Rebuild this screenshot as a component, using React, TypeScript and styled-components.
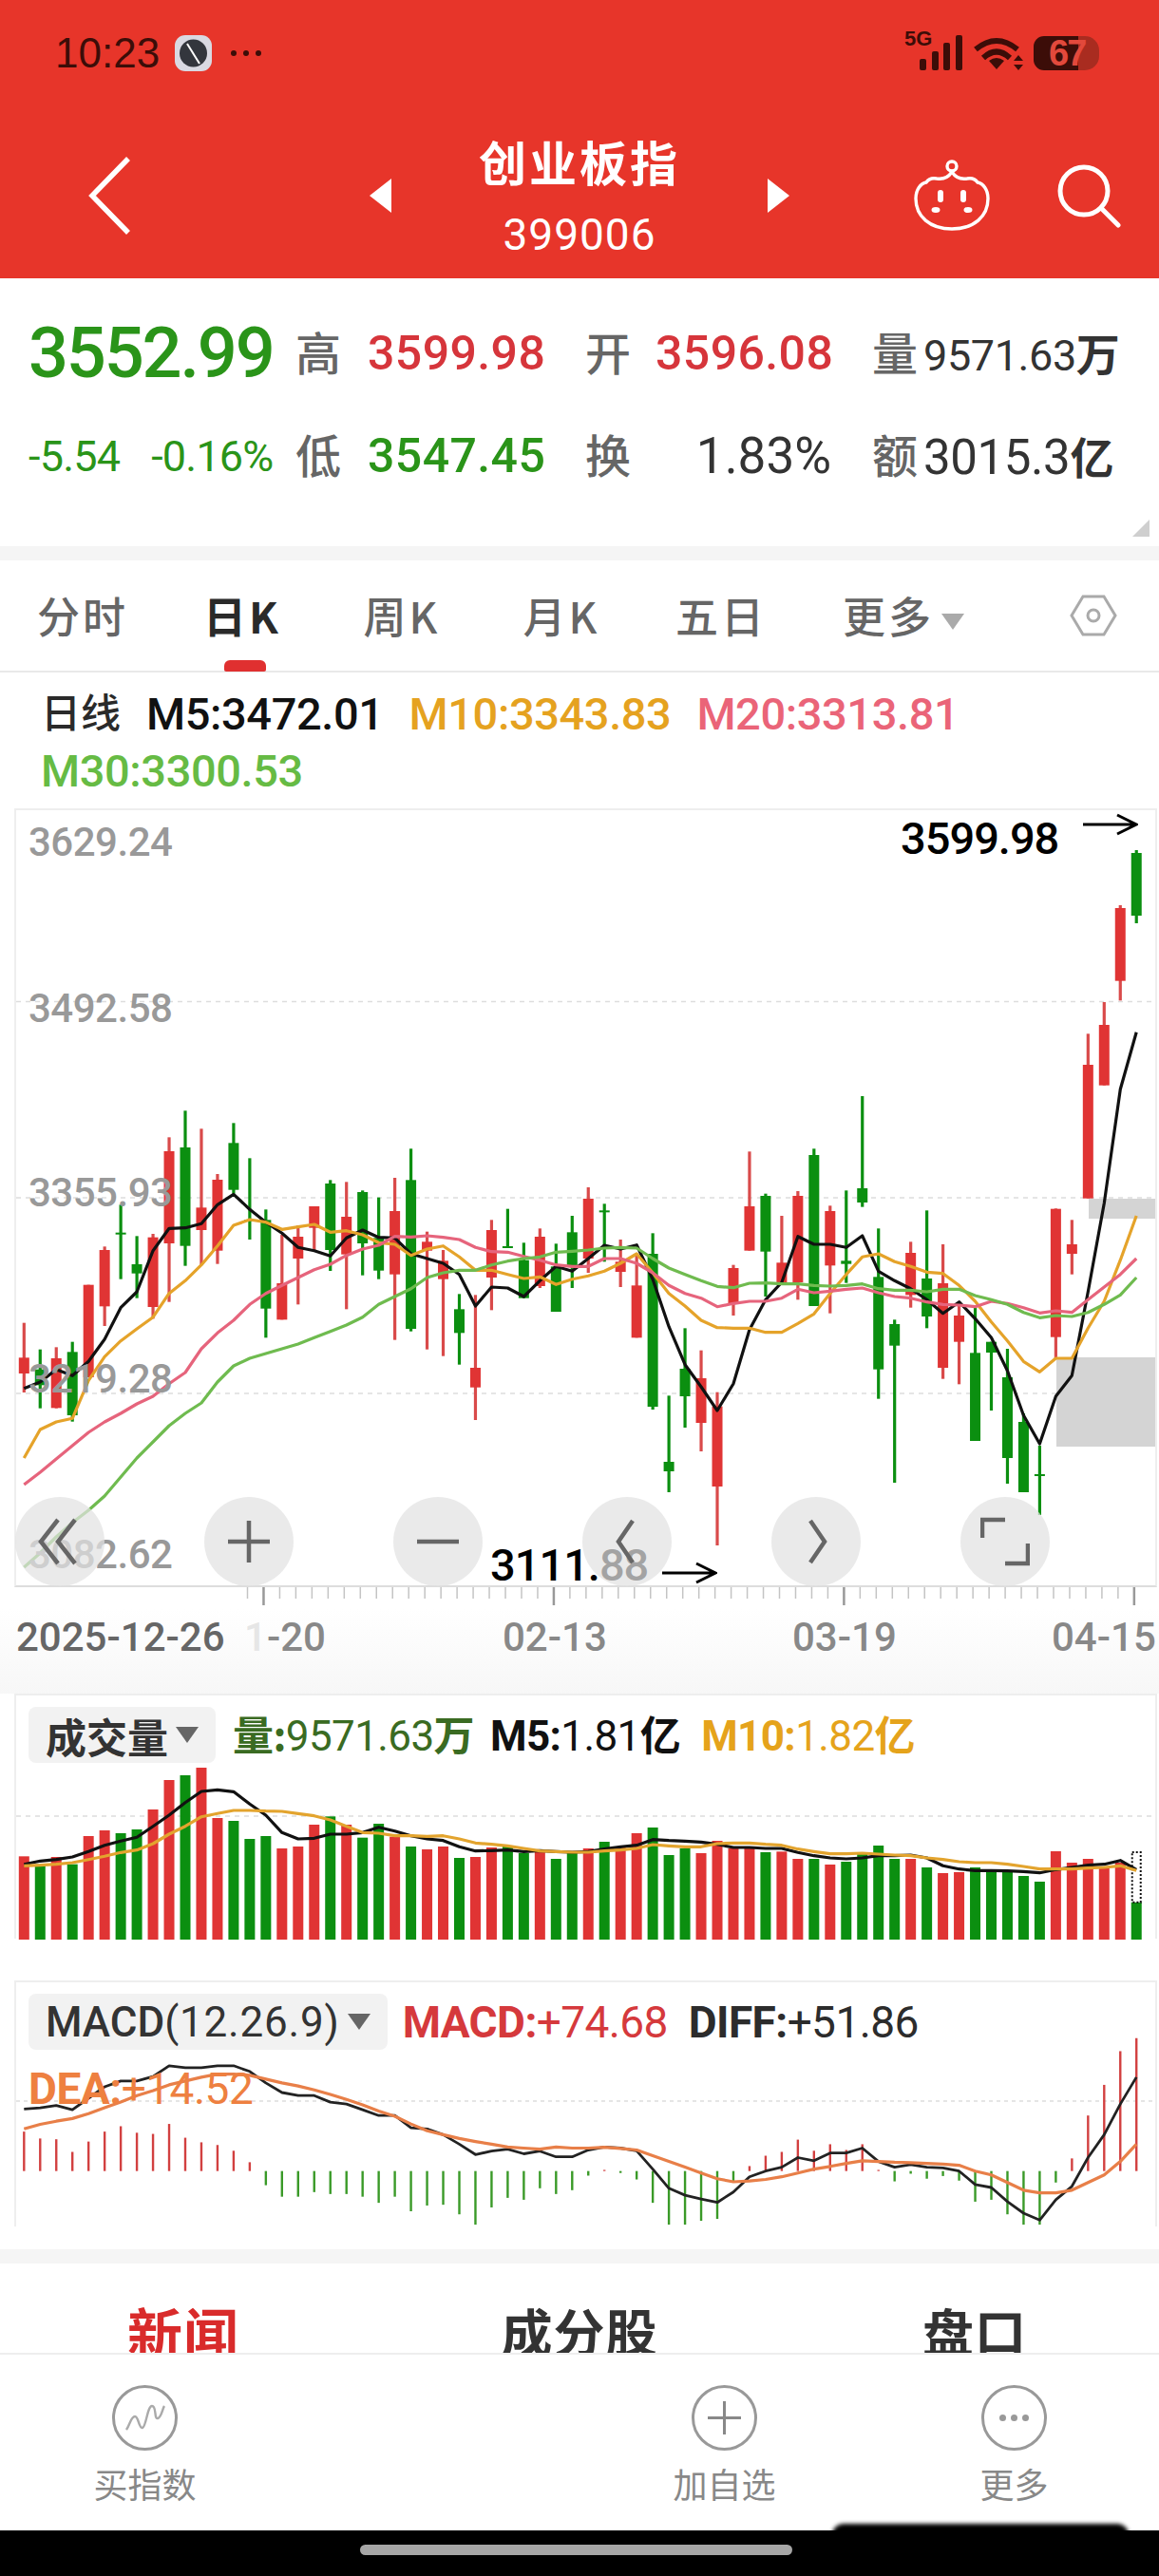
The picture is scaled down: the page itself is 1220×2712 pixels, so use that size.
import React from 'react';
import styled, { createGlobalStyle } from 'styled-components';

const GlobalStyle = createGlobalStyle`
  html, body {
    margin: 0;
    padding: 0;
    background: #fff;
  }
  * {
    box-sizing: border-box;
  }
`;

const SANS = `"Liberation Sans", "Noto Sans CJK SC", sans-serif`;
const ROBOTO = `Roboto, "Noto Sans CJK SC", sans-serif`;
const RED = '#e03434';
const GREEN = '#0b8f10';

const Page = styled.div`
  position: relative;
  width: 1220px;
  height: 2712px;
  overflow: hidden;
  background: #fff;
  font-family: ${SANS};
  display: flex;
  flex-direction: column;
`;

/* ---------- header ---------- */

const Header = styled.header`
  height: 293px;
  background: #e7352a;
  padding-top: 37px;
  flex: none;
`;

const StatusBar = styled.div`
  height: 37px;
  display: flex;
  align-items: center;
  padding-left: 58px;
  color: #3c0d08;
`;

const Clock = styled.span`
  font-size: 44px;
  line-height: 37px;
  width: 126px;
`;

const StatusRight = styled.div`
  margin-left: auto;
  margin-right: 63px;
  display: flex;
  align-items: center;
  gap: 11px;
`;

const NetworkBlock = styled.div`
  position: relative;
  width: 62px;
  height: 37px;
`;

const FiveG = styled.span`
  position: absolute;
  left: 0;
  top: -7px;
  font-size: 22px;
  line-height: 22px;
  font-weight: 700;
`;

const Battery = styled.div`
  width: 69px;
  height: 36px;
  border-radius: 11px 15px 15px 11px;
  background: linear-gradient(90deg, #3c0d08 68%, #a92c20 68%);
  color: #e2493c;
  font-size: 38px;
  font-weight: 700;
  line-height: 36px;
  padding-left: 16px;
  letter-spacing: -2px;
`;

const NavRow = styled.div`
  margin-top: 66px;
  height: 130px;
  display: grid;
  grid-template-columns: 389px 442px 1fr;
  align-items: center;
`;

const NavLeft = styled.div`
  padding-left: 92px;
  display: flex;
`;

const NavCenter = styled.div`
  display: flex;
  align-items: center;
  justify-content: space-between;
`;

const NavTitle = styled.div`
  display: flex;
  flex-direction: column;
  align-items: center;
  color: #fff;
`;

const Name = styled.div`
  margin-top: -4px;
  font-size: 50px;
  line-height: 66px;
  font-weight: 700;
  letter-spacing: 3px;
  font-family: "Noto Sans CJK SC", sans-serif;
`;

const Code = styled.div`
  margin-top: 20px;
  font-size: 46px;
  line-height: 50px;
  letter-spacing: 1px;
  font-family: ${ROBOTO};
  font-weight: 400;
`;

const NavRight = styled.div`
  padding-left: 131px;
  display: flex;
  align-items: center;
  gap: 70px;
`;

/* ---------- quote ---------- */

const Quote = styled.section`
  position: relative;
  flex: none;
  height: 282px;
  padding: 51px 0 0 30px;
  display: grid;
  grid-template-columns: 281px 76px 229px 74px 185px 97px 1fr;
  grid-auto-rows: 56px;
  row-gap: 52px;
  align-items: center;
`;

const Price = styled.div`
  font-size: 74px;
  line-height: 56px;
  letter-spacing: -2.2px;
  font-weight: 500;
  color: #2a9419;
  font-family: ${ROBOTO};
`;

const Change = styled.div`
  display: flex;
  gap: 33px;
  font-size: 45px;
  font-family: ${ROBOTO};
  color: #2a9419;
  letter-spacing: -0.8px;
`;

const QuoteLabel = styled.div<{ $pad?: number }>`
  padding-left: ${(p) => p.$pad ?? 0}px;
  margin-bottom: 6px;
  font-size: 48px;
  line-height: 56px;
  color: #666;
  font-family: "Noto Sans CJK SC", sans-serif;
  font-weight: 500;
`;

const QuoteValue = styled.div<{ $color: string }>`
  font-size: 50px;
  line-height: 56px;
  letter-spacing: 0.4px;
  font-family: ${ROBOTO};
  font-weight: 500;
  color: ${(p) => p.$color};
`;

const TurnRate = styled.div`
  font-size: 53px;
  line-height: 56px;
  font-family: ${ROBOTO};
  color: #333;
  text-align: right;
`;

const Turnover = styled.div<{ $size: number }>`
  font-size: ${(p) => p.$size}px;
  line-height: 56px;
  font-family: ${ROBOTO};
  color: #333;
  white-space: nowrap;
  letter-spacing: -0.4px;
`;

const TurnoverUnit = styled.span`
  font-size: 46px;
  font-weight: 700;
  font-family: "Noto Sans CJK SC", sans-serif;
`;

const CornerMark = styled.div`
  position: absolute;
  right: 10px;
  bottom: 10px;
  width: 0;
  height: 0;
  border-left: 18px solid transparent;
  border-bottom: 18px solid #cfcfcf;
`;

const Strip = styled.div`
  height: 15px;
  flex: none;
  background: #f5f5f5;
`;

/* ---------- period tabs ---------- */

const PeriodTabs = styled.nav`
  position: relative;
  flex: none;
  height: 118px;
  padding: 0 44px 0 3px;
  display: flex;
  align-items: center;
  border-bottom: 2px solid #e9e9e9;
`;

const PeriodTab = styled.div<{ $active?: boolean; $pad?: number }>`
  width: 168px;
  padding-left: ${(p) => p.$pad ?? 0}px;
  text-align: center;
  margin-top: -2px;
  font-size: 45px;
  letter-spacing: 3px;
  font-family: "Noto Sans CJK SC", sans-serif;
  font-weight: ${(p) => (p.$active ? 700 : 500)};
  color: ${(p) => (p.$active ? '#2a2a2a' : '#666')};
  white-space: nowrap;
`;

const Caret = styled.i<{ $size?: number; $color?: string }>`
  display: inline-block;
  width: 0;
  height: 0;
  margin-left: 8px;
  vertical-align: middle;
  border-left: ${(p) => p.$size ?? 12}px solid transparent;
  border-right: ${(p) => p.$size ?? 12}px solid transparent;
  border-top: ${(p) => (p.$size ?? 12) * 1.45}px solid ${(p) => p.$color ?? '#aaa'};
`;

const ActiveBar = styled.span`
  position: absolute;
  left: 236px;
  bottom: -1px;
  width: 44px;
  height: 12px;
  border-radius: 6px 6px 2px 2px;
  background: #e03030;
`;

const HexButton = styled.div`
  margin-left: auto;
  display: flex;
`;

/* ---------- moving average legend ---------- */

const MaLegend = styled.div`
  flex: none;
  height: 143px;
  padding: 14px 0 0 43px;
  font-size: 47px;
  line-height: 60px;
  font-family: ${ROBOTO};
  font-weight: 500;
`;

const LegendLine = styled.div`
  display: flex;
  gap: 27px;
  letter-spacing: -0.4px;
`;

const LegendItem = styled.span<{ $color: string }>`
  color: ${(p) => p.$color};
  white-space: nowrap;
`;

const LegendCn = styled(LegendItem)`
  font-size: 42px;
  letter-spacing: 0;
`;

/* ---------- main kline chart ---------- */

const ChartBox = styled.div`
  position: relative;
  flex: none;
  margin-left: 15px;
  width: 1203px;
  height: 820px;
  border: 2px solid #eee;
  border-bottom: 2px solid #ddd;
`;

const ChartSvg = styled.svg`
  display: block;
  width: 1199px;
  height: 816px;
`;

const AxisLabel = styled.span<{ $top: number }>`
  position: absolute;
  left: 13px;
  top: ${(p) => p.$top}px;
  font-size: 42px;
  line-height: 50px;
  font-family: ${ROBOTO};
  font-weight: 500;
  letter-spacing: -0.5px;
  color: #999;
`;

const Note = styled.div<{ $left: number; $top: number; $gap: number }>`
  position: absolute;
  left: ${(p) => p.$left}px;
  top: ${(p) => p.$top}px;
  display: flex;
  align-items: center;
  gap: ${(p) => p.$gap}px;
  font-size: 47px;
  line-height: 50px;
  font-weight: 500;
  color: #000;
  font-family: ${ROBOTO};
  letter-spacing: -1px;
  white-space: nowrap;
`;

const ArrowSvg = styled.svg<{ $lift: number }>`
  margin-bottom: ${(p) => p.$lift}px;
  margin-top: ${(p) => -p.$lift}px;
`;

const ControlRow = styled.div`
  position: absolute;
  left: -1px;
  right: 0;
  bottom: -1px;
  display: flex;
  gap: 105px;
`;

const Control = styled.div`
  width: 94px;
  height: 94px;
  border-radius: 50%;
  background: rgba(226, 226, 226, 0.72);
  display: flex;
  align-items: center;
  justify-content: center;
`;

/* ---------- x axis ---------- */

const XAxis = styled.div`
  flex: none;
  height: 112px;
  background: linear-gradient(#fff 20%, #f7f7f7);
`;

const TickSvg = styled.svg`
  display: block;
  width: 1220px;
  height: 22px;
`;

const DateRow = styled.div`
  display: grid;
  grid-template-columns: 240px 272px 305px 273px 1fr;
  padding-left: 17px;
  margin-top: 6px;
  font-size: 42px;
  line-height: 50px;
  font-family: ${ROBOTO};
  font-weight: 500;
  color: #888;
`;

const FirstDate = styled.span`
  color: #666;
`;

const FadedChar = styled.span`
  color: #e6e6e6;
`;

/* ---------- sub charts ---------- */

const SubPanel = styled.section<{ $height: number }>`
  position: relative;
  flex: none;
  margin-left: 15px;
  width: 1203px;
  height: ${(p) => p.$height}px;
  border: 2px solid #eee;
  border-bottom: 0;
`;

const SubHead = styled.div<{ $size: number }>`
  height: 59px;
  margin: 12px 0 0 13px;
  display: flex;
  align-items: center;
  font-family: ${ROBOTO};
  font-size: ${(p) => p.$size}px;
  white-space: nowrap;
`;

const Pill = styled.div`
  height: 59px;
  display: flex;
  align-items: center;
  padding: 0 18px;
  border-radius: 8px;
  background: #f2f2f2;
  color: #333;
  font-size: 44px;
  font-weight: 500;
`;

const PillCn = styled.span`
  font-weight: 700;
  font-size: 43px;
  font-family: "Noto Sans CJK SC", sans-serif;
`;

const PillThin = styled.span`
  font-weight: 400;
  letter-spacing: 0.8px;
`;

const HeadValue = styled.span<{ $color: string; $gap: number; $lift?: number }>`
  margin-left: ${(p) => p.$gap}px;
  margin-bottom: ${(p) => p.$lift ?? 0}px;
  color: ${(p) => p.$color};
  letter-spacing: -0.6px;
`;

const HeadKey = styled.b`
  font-weight: 700;
`;

const SubSvg = styled.svg<{ $h: number }>`
  display: block;
  width: 1199px;
  height: ${(p) => p.$h}px;
  overflow: visible;
`;

const DeaLabel = styled.div`
  position: absolute;
  left: 13px;
  top: 84px;
  font-family: ${ROBOTO};
  font-size: 46px;
  line-height: 56px;
  letter-spacing: -0.5px;
  color: #ee8040;
`;

const Gap = styled.div<{ $h: number }>`
  flex: none;
  height: ${(p) => p.$h}px;
`;

/* ---------- bottom ---------- */

const InfoTabs = styled.div`
  flex: none;
  height: 94px;
  overflow: hidden;
  display: grid;
  grid-template-columns: 386px 448px 384px;
  padding-top: 36px;
  font-family: "Noto Sans CJK SC", sans-serif;
  font-weight: 700;
  line-height: 70px;
  text-align: center;
  color: #333;
`;

const InfoTab = styled.div<{ $active?: boolean }>`
  font-size: ${(p) => (p.$active ? 58 : 54)}px;
  color: ${(p) => (p.$active ? '#d92b2b' : '#333')};
  letter-spacing: 1px;
`;

const ActionBar = styled.div`
  flex: none;
  height: 187px;
  border-top: 2px solid #eee;
  display: grid;
  grid-template-columns: repeat(4, 305px);
  padding-top: 32px;
`;

const Action = styled.div`
  display: flex;
  flex-direction: column;
  align-items: center;
  gap: 12px;
  font-family: "Noto Sans CJK SC", sans-serif;
  font-size: 36px;
  line-height: 44px;
  color: #888;
`;

const SystemBar = styled.div`
  position: relative;
  flex: 1;
  background: #000;
  padding: 15px 0 0 379px;
`;

const HomePill = styled.div`
  width: 455px;
  height: 11px;
  border-radius: 6px;
  background: #a6a6a6;
`;

const Scribble = styled.div`
  position: absolute;
  left: 876px;
  top: -7px;
  width: 312px;
  height: 30px;
  border-radius: 12px;
  background: #000;
  filter: blur(2px);
`;

/* ---------- data, read off the picture ---------- */

type Candle = [number, number, number, number, 'r' | 'g'];

// first 35 rows: y = 1100 + v / 3, the rest: y = 1000 + v / 3
const rawCandles: Candle[] = [
  [878, 988, 1038, 1098, 'r'], [962, 1025, 1075, 1148, 'g'], [955, 990, 1147, 1148, 'r'], [938, 970, 1170, 1190, 'g'],
  [758, 758, 1050, 1050, 'r'], [637, 648, 826, 888, 'r'], [505, 593, 598, 740, 'g'], [604, 693, 722, 800, 'g'],
  [597, 608, 828, 865, 'r'], [292, 336, 627, 812, 'r'], [208, 324, 635, 698, 'g'], [265, 514, 585, 695, 'r'],
  [408, 426, 650, 692, 'r'], [247, 310, 458, 470, 'g'], [358, 552, 558, 615, 'g'], [520, 553, 833, 925, 'g'],
  [600, 753, 868, 868, 'r'], [570, 606, 675, 820, 'r'], [510, 510, 578, 650, 'r'], [427, 438, 648, 714, 'g'],
  [433, 543, 662, 835, 'r'], [460, 465, 627, 728, 'g'], [482, 610, 713, 740, 'g'], [420, 525, 725, 932, 'r'],
  [328, 427, 897, 905, 'g'], [590, 622, 650, 962, 'r'], [648, 682, 740, 983, 'r'], [787, 835, 910, 1010, 'g'],
  [790, 1020, 1082, 1185, 'r'], [553, 585, 735, 838, 'r'], [518, 636, 640, 640, 'g'], [625, 680, 800, 800, 'g'],
  [580, 606, 762, 768, 'r'], [628, 700, 843, 843, 'g'], [540, 592, 700, 768, 'g'],

  [750, 786, 975, 1020, 'r'], [802, 823, 828, 985, 'g'], [915, 985, 1017, 1065, 'r'], [960, 1060, 1225, 1225, 'r'],
  [895, 960, 1443, 1452, 'g'], [1408, 1617, 1647, 1713, 'g'], [1195, 1323, 1410, 1509, 'g'], [1265, 1353, 1494, 1584, 'r'],
  [1397, 1442, 1695, 1881, 'r'], [995, 1005, 1118, 1155, 'r'], [637, 810, 950, 950, 'r'], [770, 777, 953, 1095, 'g'],
  [840, 988, 1050, 1050, 'r'], [762, 777, 1050, 1105, 'r'], [628, 648, 1125, 1125, 'g'], [808, 825, 997, 1148, 'r'],
  [760, 982, 992, 1052, 'g'], [462, 753, 798, 812, 'g'], [880, 1033, 1325, 1418, 'g'], [1168, 1182, 1250, 1683, 'g'],
  [922, 957, 1090, 1130, 'r'], [823, 1038, 1158, 1195, 'g'], [930, 1053, 1320, 1355, 'r'], [1110, 1155, 1238, 1372, 'r'],
  [1130, 1273, 1551, 1551, 'g'], [1238, 1238, 1272, 1455, 'g'], [1260, 1350, 1605, 1686, 'g'], [1464, 1491, 1713, 1713, 'g'],
  [1566, 1656, 1662, 1785, 'g'], [817, 818, 1223, 1290, 'r'], [853, 930, 960, 1025, 'r'], [265, 363, 785, 785, 'r'],
  [165, 237, 428, 428, 'r'], [-141, -132, 98, 160, 'r'], [-315, -306, -108, -84, 'g'],
];

const ma5 = [
  1085, 1065, 1025, 1045, 1000, 930, 830, 780, 650, 580, 578, 565, 505, 472, 520, 560, 595, 640, 650, 667, 610, 585, 608,
  610, 660, 675, 690, 725, 825, 765, 768, 795, 745, 700, 715,
  975, 933, 945, 932, 1040, 1190, 1310, 1380, 1455, 1370, 1200, 1105, 1050, 905, 930, 930, 940, 903, 1015, 1045, 1070,
  1105, 1148, 1112, 1165, 1225, 1330, 1470, 1560, 1410, 1345, 1080, 800, 440, 260,
];
const ma10 = [
  1305, 1215, 1191, 1180, 1060, 985, 935, 897, 860, 785, 745, 695, 635, 570, 552, 560, 583, 575, 567, 592, 587, 600, 625,
  630, 665, 645, 635, 670, 712, 712, 725, 738, 733, 757, 740,
  1030, 1015, 990, 960, 1020, 1085, 1125, 1170, 1193, 1195, 1195, 1208, 1208, 1180, 1150, 1085, 1025, 970, 960, 985, 1000,
  1018, 1022, 1060, 1110, 1175, 1235, 1300, 1333, 1290, 1290, 1195, 1110, 980, 840,
];
const ma20 = [
  1389, 1350, 1308, 1266, 1224, 1191, 1164, 1134, 1110, 1070, 1035, 960, 910, 870, 820, 785, 760, 735, 710, 693, 665, 645,
  633, 605, 607, 603, 608, 615, 640, 653, 655, 668, 680, 695, 700,
  1000, 975, 975, 990, 1020, 1060, 1085, 1100, 1127, 1117, 1110, 1110, 1100, 1072, 1083, 1078, 1072, 1068, 1083, 1095, 1100,
  1112, 1120, 1122, 1127, 1110, 1117, 1130, 1147, 1140, 1145, 1105, 1065, 1025, 975,
];
const ma30 = [
  1650, 1605, 1554, 1509, 1470, 1425, 1365, 1305, 1254, 1203, 1164, 1131, 1065, 1014, 990, 975, 960, 945, 925, 905, 885,
  860, 820, 795, 770, 735, 720, 712, 712, 695, 683, 675, 670, 655, 652,
  948, 942, 940, 942, 975, 1005, 1025, 1045, 1063, 1067, 1053, 1052, 1055, 1055, 1060, 1062, 1060, 1055, 1070, 1075, 1075,
  1080, 1072, 1072, 1092, 1105, 1120, 1145, 1162, 1155, 1158, 1145, 1120, 1090, 1035,
];

// y = 1780 + v / 3
const volume = [
  520, 545, 522, 545, 456, 438, 447, 435, 372, 279, 264, 240, 399, 408, 465, 456, 495, 489, 420, 394, 420, 461, 417, 458,
  489, 498, 489, 525, 522, 492, 487, 510, 500, 528, 510,
  495, 474, 490, 447, 429, 516, 495, 510, 471, 495, 495, 507, 505, 528, 528, 546, 537, 507, 486, 528, 528, 555, 573, 570,
  555, 565, 565, 582, 600, 504, 540, 528, 555, 540, 665,
];
const volM5 = [
  545, 535, 530, 522, 505, 485, 472, 460, 425, 390, 350, 315, 310, 316, 355, 390, 445, 465, 463, 450, 450, 445, 428, 440,
  455, 465, 470, 490, 503, 502, 500, 505, 502, 505, 507,
  505, 497, 490, 485, 467, 470, 472, 475, 482, 492, 492, 495, 495, 508, 518, 525, 528, 525, 518, 518, 516, 525, 550, 560,
  565, 565, 566, 568, 572, 562, 555, 548, 545, 533, 562,
];
const volM10 = [
  550, 548, 545, 540, 530, 520, 508, 500, 480, 450, 425, 395, 385, 375, 375, 377, 378, 385, 392, 405, 425, 445, 447, 455,
  455, 457, 455, 465, 478, 482, 487, 495, 503, 505, 507,
  507, 503, 500, 495, 483, 487, 490, 490, 480, 478, 478, 482, 485, 497, 505, 512, 512, 510, 513, 516, 518, 525, 530, 537,
  540, 540, 545, 552, 560, 560, 560, 557, 555, 550, 565,
];

// y = 2080 + v / 2.48, zero line at v = 515
const macdBars = [
  412, 430, 432, 465, 438, 412, 398, 415, 418, 392, 428, 440, 447, 462, 492, 552, 582, 582, 570, 575, 575, 582, 598, 582,
  620, 605, 603, 628, 655, 610, 585, 590, 560, 575, 565, 527, 512, 520, 537, 598, 655, 655, 645, 640, 545, 502, 475, 465,
  433, 462, 445, 460, 445, 512, 542, 522, 535, 528, 540, 595, 590, 628, 655, 655, 545, 482, 370, 290, 202, 168,
];
const diff = [
  353, 350, 344, 355, 325, 295, 280, 280, 268, 240, 245, 245, 240, 240, 255, 285, 310, 318, 318, 335, 340, 355, 370, 370,
  402, 405, 420, 445, 472, 463, 458, 470, 463, 478, 478, 460, 452, 455, 462, 510, 560, 578, 588, 597, 570, 530, 515, 505,
  480, 488, 468, 468, 455, 490, 505, 498, 505, 507, 515, 550, 558, 595, 625, 643, 590, 555, 480, 420, 340, 270,
];
const dea = [
  405, 393, 385, 378, 365, 350, 335, 318, 305, 290, 280, 270, 262, 262, 265, 275, 285, 293, 303, 315, 328, 342, 358, 372,
  392, 410, 420, 430, 438, 445, 452, 455, 458, 452, 455, 455, 453, 456, 460, 475, 490, 505, 520, 535, 543, 541, 537, 530,
  520, 510, 503, 495, 488, 490, 492, 493, 495, 497, 500, 515, 525, 545, 565, 572, 572, 565, 545, 525, 490, 445,
];

const barX = (i: number) => 25.3 + i * 16.97;
const klineY = (i: number, v: number) => (i < 35 ? 1100 : 1000) + v / 3;
const volY = (v: number) => 1780 + v / 3;
const macdY = (v: number) => 2080 + v / 2.48;

const points = (vals: number[], toY: (i: number, v: number) => number) =>
  vals.map((v, i) => `${barX(i).toFixed(1)},${toY(i, v).toFixed(1)}`).join(' ');

const Line = ({ vals, toY, color, w = 3.2 }: { vals: number[]; toY: (i: number, v: number) => number; color: string; w?: number }) => (
  <polyline points={points(vals, toY)} fill="none" stroke={color} strokeWidth={w} strokeLinejoin="round" />
);

const KlineChart = () => (
  <ChartSvg viewBox="17 853 1199 816">
    {[1054.5, 1261, 1467].map((y) => (
      <line key={y} x1="17" x2="1216" y1={y} y2={y} stroke="#ddd" strokeWidth="1.5" strokeDasharray="5 5" />
    ))}
    <rect x="1146" y="1262" width="70" height="21" fill="#d4d4d4" />
    <rect x="1112" y="1429" width="104" height="94" fill="#d4d4d4" />
    {rawCandles.map(([wt, bt, bb, wb, c], i) => {
      const x = barX(i);
      const fill = c === 'r' ? RED : GREEN;
      const wick = c === 'r' ? '#d94a4a' : GREEN;
      return (
        <g key={i}>
          <rect x={x - 1.6} y={klineY(i, wt)} width="3.2" height={(wb - wt) / 3} fill={wick} />
          <rect x={x - 5.5} y={klineY(i, bt)} width="11" height={Math.max((bb - bt) / 3, 2)} fill={fill} />
        </g>
      );
    })}
    <Line vals={ma5} toY={klineY} color="#111" />
    <Line vals={ma10} toY={klineY} color="#e5a32a" />
    <Line vals={ma20} toY={klineY} color="#e6647c" />
    <Line vals={ma30} toY={klineY} color="#6fbb4f" />
  </ChartSvg>
);

const VolumeChart = () => (
  <SubSvg $h={181} viewBox="17 1860 1199 181">
    <line x1="17" x2="1216" y1="1911" y2="1911" stroke="#ddd" strokeWidth="1.5" strokeDasharray="5 5" />
    {volume.map((v, i) => (
      <rect
        key={i}
        x={barX(i) - 5.5}
        y={volY(v)}
        width="11"
        height={2041 - volY(v)}
        fill={rawCandles[i][4] === 'r' ? RED : GREEN}
      />
    ))}
    <rect x={barX(69) - 4.5} y={volY(507)} width="9" height={(665 - 507) / 3} fill="#fff" stroke="#111" strokeWidth="2" strokeDasharray="2 2" />
    <Line vals={volM5} toY={(_, v) => volY(v)} color="#111" w={3.2} />
    <Line vals={volM10} toY={(_, v) => volY(v)} color="#e3a42e" w={3.2} />
  </SubSvg>
);

const MacdChart = () => (
  <SubSvg $h={173} viewBox="17 2171 1199 173">
    <line x1="17" x2="1216" y1="2214" y2="2214" stroke="#ddd" strokeWidth="1.5" strokeDasharray="4 4" />
    {macdBars.map((v, i) => (
      <line
        key={i}
        x1={barX(i)}
        x2={barX(i)}
        y1={macdY(515)}
        y2={macdY(v)}
        stroke={v < 515 ? '#d24040' : '#3a9a28'}
        strokeWidth="2.4"
      />
    ))}
    <Line vals={diff} toY={(_, v) => macdY(v)} color="#222" w={2.8} />
    <Line vals={dea} toY={(_, v) => macdY(v)} color="#e87f48" w={3.2} />
  </SubSvg>
);

/* ---------- icons ---------- */

const Arrow = ({ lift = 0 }: { lift?: number }) => (
  <ArrowSvg $lift={lift} width="58" height="24" viewBox="0 0 58 24" fill="none" stroke="#000" strokeWidth="3">
    <path d="M0 12h56M36 2l20 10-20 10" />
  </ArrowSvg>
);

const Icon48 = ({ d }: { d: string }) => (
  <svg width="52" height="52" viewBox="0 0 52 52" fill="none" stroke="#666" strokeWidth="4.5">
    <path d={d} />
  </svg>
);

const BottomIcon = ({ children }: { children: React.ReactNode }) => (
  <svg width="69" height="69" viewBox="0 0 69 69" fill="none" stroke="#999" strokeWidth="3">
    <circle cx="34.5" cy="34.5" r="33" />
    {children}
  </svg>
);

const ticks = Array.from({ length: 56 }, (_, i) => 260.5 + i * 16.97);

export default function App() {
  return (
    <Page>
      <GlobalStyle />
      <Header>
        <StatusBar>
          <Clock>10:23</Clock>
          <svg width="39" height="38" viewBox="0 0 39 38">
            <rect width="39" height="38" rx="11" fill="#d9d9e2" />
            <circle cx="19.5" cy="19" r="14.5" fill="#33363d" />
            <path d="M13 9l13 21" stroke="#fff" strokeWidth="2" />
          </svg>
          <svg width="34" height="8" viewBox="0 0 34 8" fill="#3c0d08" style={{ marginLeft: 19 }}>
            <circle cx="4" cy="4" r="3" />
            <circle cx="17" cy="4" r="3" />
            <circle cx="30" cy="4" r="3" />
          </svg>
          <StatusRight>
            <NetworkBlock>
              <FiveG>5G</FiveG>
              <svg width="62" height="37" viewBox="0 0 62 37" fill="#3c0d08">
                <rect x="16" y="25" width="7" height="12" rx="2" />
                <rect x="29" y="17" width="7" height="20" rx="2" />
                <rect x="41" y="8" width="7" height="29" rx="2" />
                <rect x="54" y="0" width="7" height="37" rx="2" />
              </svg>
            </NetworkBlock>
            <svg width="52" height="38" viewBox="0 0 52 38" fill="none" stroke="#3c0d08" strokeWidth="6">
              <path d="M2 15Q24 -3 46 15" />
              <path d="M10 24Q24 11 38 24" />
              <path d="M16 27L24 36L32 27Q24 21 16 27Z" fill="#3c0d08" stroke="none" />
              <path d="M42 27l5 -6l5 6zM42 31l5 6l5 -6z" fill="#3c0d08" stroke="none" />
            </svg>
            <Battery>67</Battery>
          </StatusRight>
        </StatusBar>
        <NavRow>
          <NavLeft>
            <svg width="46" height="84" viewBox="0 0 46 84" fill="none" stroke="#fff" strokeWidth="5.5">
              <path d="M43 3L5 42l38 39" />
            </svg>
          </NavLeft>
          <NavCenter>
            <svg width="24" height="36" viewBox="0 0 24 36" fill="#fff">
              <path d="M23 0v36L0 18z" />
            </svg>
            <NavTitle>
              <Name>创业板指</Name>
              <Code>399006</Code>
            </NavTitle>
            <svg width="24" height="36" viewBox="0 0 24 36" fill="#fff">
              <path d="M1 0v36l23-18z" />
            </svg>
          </NavCenter>
          <NavRight>
            <svg width="80" height="76" viewBox="0 0 80 76" fill="none" stroke="#fff" strokeWidth="3.4">
              <circle cx="40" cy="7" r="5" />
              <path d="M40 13c-4 6-10 8-16 7-5-1-9 1-11 4-6 1-11 8-11 17 0 19 15 32 38 32s38-13 38-32c0-9-5-16-11-17-2-3-6-5-11-4-6 1-12-1-16-7z" />
              <g fill="#fff" stroke="none">
                <rect x="25" y="32" width="6" height="13" rx="3" />
                <rect x="49" y="32" width="6" height="13" rx="3" />
                <ellipse cx="23" cy="53" rx="4.5" ry="3" />
                <ellipse cx="57" cy="53" rx="4.5" ry="3" />
              </g>
            </svg>
            <svg width="68" height="68" viewBox="0 0 68 68" fill="none" stroke="#fff" strokeWidth="5">
              <circle cx="29" cy="29" r="25" />
              <path d="M47 47l18 18" strokeLinecap="round" />
            </svg>
          </NavRight>
        </NavRow>
      </Header>

      <Quote>
        <Price>3552.99</Price>
        <QuoteLabel>高</QuoteLabel>
        <QuoteValue $color="#d6353b">3599.98</QuoteValue>
        <QuoteLabel>开</QuoteLabel>
        <QuoteValue $color="#d6353b">3596.08</QuoteValue>
        <QuoteLabel $pad={43}>量</QuoteLabel>
        <Turnover $size={45}>
          9571.63<TurnoverUnit>万</TurnoverUnit>
        </Turnover>
        <Change>
          <span>-5.54</span>
          <span>-0.16%</span>
        </Change>
        <QuoteLabel>低</QuoteLabel>
        <QuoteValue $color="#2a9419">3547.45</QuoteValue>
        <QuoteLabel>换</QuoteLabel>
        <TurnRate>1.83%</TurnRate>
        <QuoteLabel $pad={43}>额</QuoteLabel>
        <Turnover $size={51}>
          3015.3<TurnoverUnit>亿</TurnoverUnit>
        </Turnover>
        <CornerMark />
      </Quote>
      <Strip />

      <PeriodTabs>
        <PeriodTab>分时</PeriodTab>
        <PeriodTab $active>日K</PeriodTab>
        <PeriodTab>周K</PeriodTab>
        <PeriodTab>月K</PeriodTab>
        <PeriodTab>五日</PeriodTab>
        <PeriodTab $pad={44}>
          更多
          <Caret />
        </PeriodTab>
        <ActiveBar />
        <HexButton>
          <svg width="50" height="46" viewBox="0 0 50 46" fill="none" stroke="#aaa" strokeWidth="3">
            <path d="M14 3h22l12 20-12 20H14L2 23z" />
            <circle cx="25" cy="23" r="6" />
          </svg>
        </HexButton>
      </PeriodTabs>

      <MaLegend>
        <LegendLine>
          <LegendCn $color="#2a2a2a">日线</LegendCn>
          <LegendItem $color="#111">M5:3472.01</LegendItem>
          <LegendItem $color="#e5a21f">M10:3343.83</LegendItem>
          <LegendItem $color="#ea6478">M20:3313.81</LegendItem>
        </LegendLine>
        <LegendLine>
          <LegendItem $color="#66bb44">M30:3300.53</LegendItem>
        </LegendLine>
      </MaLegend>

      <ChartBox>
        <KlineChart />
        <AxisLabel $top={9}>3629.24</AxisLabel>
        <AxisLabel $top={184}>3492.58</AxisLabel>
        <AxisLabel $top={378}>3355.93</AxisLabel>
        <AxisLabel $top={574}>3219.28</AxisLabel>
        <AxisLabel $top={759}>3082.62</AxisLabel>
        <Note $left={931} $top={5} $gap={26}>
          3599.98
          <Arrow lift={15} />
        </Note>
        <Note $left={499} $top={770} $gap={15}>
          3111.88
          <Arrow lift={-8} />
        </Note>
        <ControlRow>
          <Control>
            <Icon48 d="M24 3L6 26l18 23M42 3L24 26l18 23" />
          </Control>
          <Control>
            <Icon48 d="M26 4v44M4 26h44" />
          </Control>
          <Control>
            <Icon48 d="M4 26h44" />
          </Control>
          <Control>
            <Icon48 d="M32 4L17 26l15 22" />
          </Control>
          <Control>
            <Icon48 d="M20 4l15 22-15 22" />
          </Control>
          <Control>
            <Icon48 d="M2 22V3h24M26 49h24V28" />
          </Control>
        </ControlRow>
      </ChartBox>

      <XAxis>
        <TickSvg viewBox="0 0 1220 22">
          {ticks.map((x, i) => (
            <line
              key={x}
              x1={x}
              x2={x}
              y1="0"
              y2={(i - 1) % 18 === 0 ? 19 : 12}
              stroke={(i - 1) % 18 === 0 ? '#999' : '#c4c4c4'}
              strokeWidth={(i - 1) % 18 === 0 ? 2.5 : 1.5}
            />
          ))}
        </TickSvg>
        <DateRow>
          <FirstDate>2025-12-26</FirstDate>
          <span>
            <FadedChar>1</FadedChar>-20
          </span>
          <span>02-13</span>
          <span>03-19</span>
          <span>04-15</span>
        </DateRow>
      </XAxis>

      <SubPanel $height={258}>
        <SubHead $size={44}>
          <Pill>
            <PillCn>成交量</PillCn>
            <Caret $size={12} $color="#666" />
          </Pill>
          <HeadValue $color="#3a6b22" $gap={18} $lift={5}>
            <PillCn>量:</PillCn>9571.63<PillCn>万</PillCn>
          </HeadValue>
          <HeadValue $color="#111" $gap={17} $lift={5}>
            <HeadKey>M5:</HeadKey>1.81<PillCn>亿</PillCn>
          </HeadValue>
          <HeadValue $color="#e5a31b" $gap={22} $lift={5}>
            <HeadKey>M10:</HeadKey>1.82<PillCn>亿</PillCn>
          </HeadValue>
        </SubHead>
        <Gap $h={5} />
        <VolumeChart />
      </SubPanel>
      <Gap $h={44} />

      <SubPanel $height={259}>
        <SubHead $size={46}>
          <Pill>
            MACD<PillThin>(12.26.9)</PillThin>
            <Caret $size={12} $color="#666" />
          </Pill>
          <HeadValue $color="#d5393c" $gap={16}>
            <HeadKey>MACD:</HeadKey>+74.68
          </HeadValue>
          <HeadValue $color="#2c2c2c" $gap={22}>
            <HeadKey>DIFF:</HeadKey>+51.86
          </HeadValue>
        </SubHead>
        <Gap $h={11} />
        <MacdChart />
        <DeaLabel>
          <HeadKey>DEA:</HeadKey>+14.52
        </DeaLabel>
      </SubPanel>
      <Gap $h={24} />
      <Strip />

      <InfoTabs>
        <InfoTab $active>新闻</InfoTab>
        <InfoTab>成分股</InfoTab>
        <InfoTab>盘口</InfoTab>
      </InfoTabs>

      <ActionBar>
        <Action>
          <BottomIcon>
            <path d="M15 47c4-6 5-14 9-14s4 13 8 12 5-23 10-23 2 14 6 13 5-10 7-13" strokeWidth="2.4" stroke="#aaa" />
          </BottomIcon>
          买指数
        </Action>
        <div />
        <Action>
          <BottomIcon>
            <path d="M34.5 17v35M17 34.5h35" stroke="#888" />
          </BottomIcon>
          加自选
        </Action>
        <Action>
          <BottomIcon>
            <g fill="#999" stroke="none">
              <circle cx="22.5" cy="34.5" r="3.5" />
              <circle cx="34.5" cy="34.5" r="3.5" />
              <circle cx="46.5" cy="34.5" r="3.5" />
            </g>
          </BottomIcon>
          更多
        </Action>
      </ActionBar>

      <SystemBar>
        <HomePill />
        <Scribble />
      </SystemBar>
    </Page>
  );
}
